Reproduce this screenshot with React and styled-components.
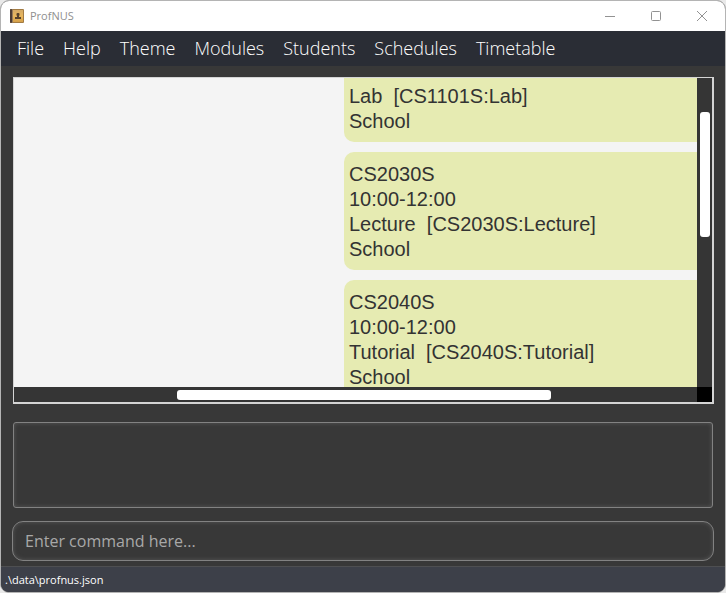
import React from "react";
import styled, { createGlobalStyle } from "styled-components";

const GlobalStyle = createGlobalStyle`
  *, *::before, *::after { box-sizing: border-box; }
  body {
    margin: 0;
    background: #e9e9e9;
    font-family: "Open Sans", "Noto Sans", sans-serif;
  }
`;

const Window = styled.div`
  display: flex;
  flex-direction: column;
  min-height: 100vh;
  border: 1px solid #b4b4b4;
  border-radius: 9px;
  background: #383838;
  overflow: hidden;
`;

const TitleBar = styled.header`
  display: flex;
  align-items: center;
  height: 30px;
  padding-left: 9px;
  background: #ffffff;
`;

const Title = styled.h1`
  flex: 1;
  margin: 0 0 0 6px;
  font-size: 11px;
  font-weight: 400;
  line-height: 16px;
  color: #8f8f8f;
`;

const WindowButton = styled.button`
  display: flex;
  align-items: center;
  justify-content: center;
  width: 46px;
  height: 30px;
  padding: 0;
  border: 0;
  background: transparent;
  color: #929292;
`;

const MenuBar = styled.nav`
  display: flex;
  align-items: center;
  gap: 19px;
  height: 35px;
  padding: 0 16px 2px;
  background: #2a2d35;
`;

const MenuButton = styled.button`
  padding: 0;
  border: 0;
  background: transparent;
  font-family: inherit;
  font-size: 18px;
  font-weight: 300;
  line-height: 24px;
  color: #ffffff;
`;

const Content = styled.main`
  display: flex;
  flex: 1;
  flex-direction: column;
  padding: 11px 11px 5px;
`;

const ScrollPane = styled.section`
  display: grid;
  flex: 1;
  grid-template-columns: 1fr 15px;
  grid-template-rows: 1fr 15px;
  margin: 0 0 18px 1px;
  border: solid #d4d4d4;
  border-width: 1px 2px 2px 1px;
`;

const Viewport = styled.div`
  height: 309px;
  padding-left: 330px;
  background: #f4f4f4;
  overflow: hidden;
`;

const ScheduleList = styled.ul`
  display: flex;
  flex-direction: column;
  gap: 10px;
  margin: 0;
  padding: 0;
  list-style: none;
`;

const ScheduleCard = styled.li`
  padding: ${(p) => (p.$cut ? "6px 0 8px 5px" : "10px 0 8px 5px")};
  border-radius: ${(p) => (p.$cut ? "0 0 0 10px" : "10px 0 0 10px")};
  background: #e6ebb2;
`;

const CardLine = styled.p`
  margin: 0;
  font-family: "Liberation Sans", Arial, sans-serif;
  font-size: 20px;
  line-height: 25px;
  color: #333333;
  white-space: pre;
`;

const VerticalTrack = styled.div`
  padding: 34px 2px 0 3px;
  background: #353535;
`;

const HorizontalTrack = styled.div`
  display: flex;
  padding: 3px 0 2px 163px;
  background: #353535;
`;

const VerticalThumb = styled.div`
  height: 125px;
  border-radius: 3px;
  background: #ffffff;
`;

const HorizontalThumb = styled.div`
  width: 72%;
  border-radius: 3px;
  background: #ffffff;
`;

const ScrollCorner = styled.div`
  background: #000000;
`;

const ResultBox = styled.textarea`
  display: block;
  height: 86px;
  margin: 0 1px 13px;
  border: 1px solid #828282;
  border-radius: 3px;
  outline: 0;
  resize: none;
  background: #383838;
  box-shadow: inset 0 0 4px #595959;
  color: #ffffff;
`;

const CommandInput = styled.input`
  height: 40px;
  padding: 0 12px;
  border: 1px solid #828282;
  border-radius: 11px;
  outline: 0;
  background: #383838;
  box-shadow: inset 0 0 4px #595959;
  font-family: inherit;
  font-size: 16px;
  color: #ffffff;

  &::placeholder {
    color: #a8a8a8;
    opacity: 1;
  }
`;

const StatusBar = styled.footer`
  height: 26px;
  padding: 4px;
  border-top: 1px solid #4e4f51;
  background: #3d4049;
  font-size: 11px;
  line-height: 18px;
  color: #ffffff;
`;

const AddressBookIcon = () => (
  <svg width="14" height="14" viewBox="0 0 14 14" aria-hidden="true">
    <defs>
      <linearGradient id="cover" x1="0" y1="0" x2="0" y2="1">
        <stop offset="0" stopColor="#d5aa66" />
        <stop offset="0.5" stopColor="#e8b75e" />
        <stop offset="1" stopColor="#d49f48" />
      </linearGradient>
    </defs>
    <rect width="14" height="14" rx="1" fill="#a27b43" />
    <rect x="3" y="1" width="10" height="12" fill="url(#cover)" />
    <rect width="2" height="14" rx="1" fill="#4c3c35" />
    <rect x="2" width="1" height="14" fill="#967b5b" />
    <rect x="6.500" y="4" width="3" height="3" rx="1" fill="#56412c" />
    <path d="M7 7h2v1h2v2H5V8h2z" fill="#56412c" />
  </svg>
);

const windowActions = [
  { label: "Minimize", path: "M0 5.500H10" },
  { label: "Maximize", path: "M1.500 .5H8.500Q9.500 .5 9.500 1.500V8.500Q9.500 9.500 8.500 9.500H1.500Q.5 9.500 .5 8.500V1.500Q.5 .5 1.500 .5Z" },
  { label: "Close", path: "M0 0L10 10M10 0L0 10" },
];

const menus = ["File", "Help", "Theme", "Modules", "Students", "Schedules", "Timetable"];

const schedules = [
  { id: "CS1101S", cut: true, lines: ["Lab  [CS1101S:Lab]", "School"] },
  { id: "CS2030S", lines: ["CS2030S", "10:00-12:00", "Lecture  [CS2030S:Lecture]", "School"] },
  { id: "CS2040S", lines: ["CS2040S", "10:00-12:00", "Tutorial  [CS2040S:Tutorial]", "School"] },
];

export default function App() {
  return (
    <>
      <GlobalStyle />
      <Window>
        <TitleBar>
          <AddressBookIcon />
          <Title>ProfNUS</Title>
          {windowActions.map(({ label, path }) => (
            <WindowButton key={label} type="button" aria-label={label}>
              <svg width="10" height="10" viewBox="0 0 10 10" fill="none" stroke="currentColor">
                <path d={path} />
              </svg>
            </WindowButton>
          ))}
        </TitleBar>
        <MenuBar>
          {menus.map((menu) => (
            <MenuButton key={menu} type="button">{menu}</MenuButton>
          ))}
        </MenuBar>
        <Content>
          <ScrollPane>
            <Viewport>
              <ScheduleList>
                {schedules.map(({ id, cut, lines }) => (
                  <ScheduleCard key={id} $cut={cut}>
                    {lines.map((line) => (
                      <CardLine key={line}>{line}</CardLine>
                    ))}
                  </ScheduleCard>
                ))}
              </ScheduleList>
            </Viewport>
            <VerticalTrack><VerticalThumb /></VerticalTrack>
            <HorizontalTrack><HorizontalThumb /></HorizontalTrack>
            <ScrollCorner />
          </ScrollPane>
          <ResultBox aria-label="Result" readOnly />
          <CommandInput type="text" aria-label="Command" placeholder="Enter command here..." />
        </Content>
        <StatusBar>.\data\profnus.json</StatusBar>
      </Window>
    </>
  );
}
